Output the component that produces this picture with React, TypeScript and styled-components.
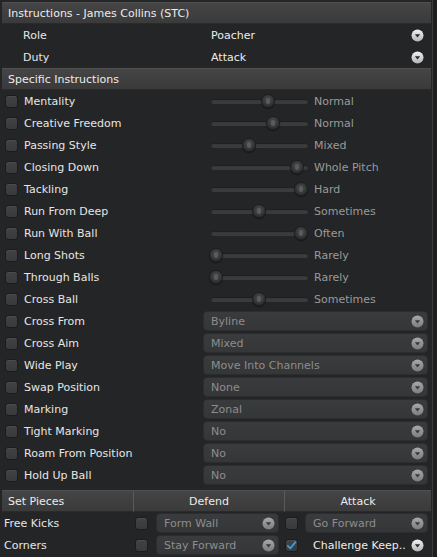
import React from "react";
import styled, { createGlobalStyle } from "styled-components";

const Global = createGlobalStyle`
  html, body { margin: 0; padding: 0; background: #1c1d1e; }
  body { font-family: "DejaVu Sans", "Liberation Sans", sans-serif; font-size: 11px; color: #e4e4e4; }
  * { box-sizing: border-box; }
`;

const Frame = styled.div`
  width: 437px;
  height: 557px;
  display: flex;
  background: #242526;
  overflow: hidden;
`;

const Panel = styled.div`
  width: 429px;
  margin-left: 2px;
  padding-top: 2px;
  display: flex;
  flex-direction: column;
`;

const Gutter = styled.div`
  flex: 1;
  margin-left: 1px;
  border-left: 1px solid #3a3b3c;
  background: #1d1e1f;
`;

const HeaderBar = styled.div`
  height: 22px;
  display: flex;
  align-items: center;
  padding-left: 6px;
  background: linear-gradient(#454545, #3a3a3a);
  border-top: 1px solid #505050;
  border-bottom: 1px solid #2a2a2a;
  color: #ececec;
`;

const Row = styled.div`
  height: 22px;
  display: grid;
  grid-template-columns: 201px 1fr;
  align-items: center;
`;

const LabelCell = styled.div<{ $indent?: number }>`
  display: flex;
  align-items: center;
  gap: 6px;
  padding-left: ${(p) => p.$indent ?? 3}px;
  color: #e6e6e6;
  white-space: nowrap;
`;

const Box = styled.div<{ $checked?: boolean }>`
  width: 13px;
  height: 13px;
  flex: none;
  border-radius: 3px;
  background: linear-gradient(#414243, #393a3b);
  border: 1px solid #1c1c1c;
  box-shadow: inset 0 1px 0 rgba(255, 255, 255, 0.06);
  display: flex;
  align-items: center;
  justify-content: center;
`;

const SliderWrap = styled.div`
  display: flex;
  align-items: center;
  padding-left: 8px;
`;

const Track = styled.div`
  position: relative;
  width: 97px;
  height: 5px;
  border-radius: 3px;
  background: #3a3b3c;
  box-shadow: inset 0 1px 1px rgba(0, 0, 0, 0.5);
`;

const Thumb = styled.div<{ $x: number }>`
  position: absolute;
  top: 50%;
  left: ${(p) => p.$x}px;
  width: 14px;
  height: 14px;
  margin-left: -7px;
  margin-top: -7px;
  border-radius: 50%;
  background: radial-gradient(circle at 50% 40%, #4c4d4e, #2f3031 70%);
  border: 1px solid #1e1e1e;
  box-shadow: 0 1px 1px rgba(0, 0, 0, 0.4);
  &::after {
    content: "";
    position: absolute;
    left: 4px;
    top: 3px;
    width: 4px;
    height: 6px;
    border-radius: 2px;
    background: #5a5b5c;
  }
`;

const SliderValue = styled.span`
  margin-left: 6px;
  color: #9a9a9a;
`;

const Select = styled.div<{ $enabled?: boolean; $w?: number }>`
  height: 20px;
  width: ${(p) => (p.$w ? `${p.$w}px` : "auto")};
  display: flex;
  align-items: center;
  justify-content: space-between;
  padding-left: 7px;
  padding-right: 3px;
  border-radius: 4px;
  background: ${(p) => (p.$enabled ? "transparent" : "linear-gradient(#3a3b3c, #353637)")};
  border: 1px solid ${(p) => (p.$enabled ? "transparent" : "#2c2d2e")};
  color: ${(p) => (p.$enabled ? "#ededed" : "#8d8d8d")};
  white-space: nowrap;
  overflow: hidden;
`;

const MainSelect = styled(Select)`
  margin-left: 0;
  margin-right: 3px;
`;

const SetGrid = styled.div`
  margin-top: 4px;
  display: grid;
  grid-template-columns: 131px 151px 147px;
`;

const SetHead = styled.div<{ $center?: boolean; $divider?: boolean }>`
  height: 22px;
  display: flex;
  align-items: center;
  justify-content: ${(p) => (p.$center ? "center" : "flex-start")};
  padding-left: ${(p) => (p.$center ? 0 : 6)}px;
  background: linear-gradient(#454545, #3a3a3a);
  border-top: 1px solid #505050;
  border-bottom: 1px solid #2a2a2a;
  border-left: ${(p) => (p.$divider ? "1px solid #5a5a5a" : "none")};
  color: #ececec;
`;

const SetLabel = styled.div`
  height: 22px;
  display: flex;
  align-items: center;
  padding-left: 2px;
  color: #e6e6e6;
`;

const SetCell = styled.div<{ $pl: number; $gap: number }>`
  height: 22px;
  display: flex;
  align-items: center;
  padding-left: ${(p) => p.$pl}px;
  gap: ${(p) => p.$gap}px;
`;

const Arrow = ({ bright }: { bright?: boolean }) => (
  <svg width="13" height="13" viewBox="0 0 13 13" style={{ flex: "none" }}>
    <defs>
      <linearGradient id={bright ? "ab" : "ad"} x1="0" y1="0" x2="0" y2="1">
        <stop offset="0" stopColor={bright ? "#f2f2f2" : "#a9a9a9"} />
        <stop offset="1" stopColor={bright ? "#b4b4b4" : "#7c7c7c"} />
      </linearGradient>
    </defs>
    <circle cx="6.5" cy="6.5" r="6" fill={`url(#${bright ? "ab" : "ad"})`} />
    <path d="M3.8 5.2 H9.2 L6.5 8.4 Z" fill={bright ? "#2a2a2a" : "#3a3a3a"} />
  </svg>
);

const Check = () => (
  <svg width="11" height="11" viewBox="0 0 11 11">
    <path d="M1.8 5.8 L4.3 8.3 L9.4 2.2" fill="none" stroke="#3d9be0" strokeWidth="1.8" strokeLinecap="round" strokeLinejoin="round" />
  </svg>
);

type Ctrl =
  | { kind: "slider"; x: number; value: string }
  | { kind: "select"; value: string };

const rows: { label: string; ctrl: Ctrl }[] = [
  { label: "Mentality", ctrl: { kind: "slider", x: 57, value: "Normal" } },
  { label: "Creative Freedom", ctrl: { kind: "slider", x: 62, value: "Normal" } },
  { label: "Passing Style", ctrl: { kind: "slider", x: 38, value: "Mixed" } },
  { label: "Closing Down", ctrl: { kind: "slider", x: 86, value: "Whole Pitch" } },
  { label: "Tackling", ctrl: { kind: "slider", x: 90, value: "Hard" } },
  { label: "Run From Deep", ctrl: { kind: "slider", x: 48, value: "Sometimes" } },
  { label: "Run With Ball", ctrl: { kind: "slider", x: 90, value: "Often" } },
  { label: "Long Shots", ctrl: { kind: "slider", x: 5, value: "Rarely" } },
  { label: "Through Balls", ctrl: { kind: "slider", x: 5, value: "Rarely" } },
  { label: "Cross Ball", ctrl: { kind: "slider", x: 48, value: "Sometimes" } },
  { label: "Cross From", ctrl: { kind: "select", value: "Byline" } },
  { label: "Cross Aim", ctrl: { kind: "select", value: "Mixed" } },
  { label: "Wide Play", ctrl: { kind: "select", value: "Move Into Channels" } },
  { label: "Swap Position", ctrl: { kind: "select", value: "None" } },
  { label: "Marking", ctrl: { kind: "select", value: "Zonal" } },
  { label: "Tight Marking", ctrl: { kind: "select", value: "No" } },
  { label: "Roam From Position", ctrl: { kind: "select", value: "No" } },
  { label: "Hold Up Ball", ctrl: { kind: "select", value: "No" } },
];

export default function App() {
  return (
    <>
      <Global />
      <Frame>
        <Panel>
          <HeaderBar>Instructions - James Collins (STC)</HeaderBar>
          <Row>
            <LabelCell $indent={21}>Role</LabelCell>
            <MainSelect $enabled>
              Poacher
              <Arrow bright />
            </MainSelect>
          </Row>
          <Row>
            <LabelCell $indent={21}>Duty</LabelCell>
            <MainSelect $enabled>
              Attack
              <Arrow bright />
            </MainSelect>
          </Row>
          <HeaderBar>Specific Instructions</HeaderBar>
          {rows.map((r) => (
            <Row key={r.label}>
              <LabelCell>
                <Box />
                {r.label}
              </LabelCell>
              {r.ctrl.kind === "slider" ? (
                <SliderWrap>
                  <Track>
                    <Thumb $x={r.ctrl.x} />
                  </Track>
                  <SliderValue>{r.ctrl.value}</SliderValue>
                </SliderWrap>
              ) : (
                <MainSelect>
                  {r.ctrl.value}
                  <Arrow />
                </MainSelect>
              )}
            </Row>
          ))}
          <SetGrid>
            <SetHead>Set Pieces</SetHead>
            <SetHead $center $divider>Defend</SetHead>
            <SetHead $center $divider>Attack</SetHead>

            <SetLabel>Free Kicks</SetLabel>
            <SetCell $pl={2} $gap={8}>
              <Box />
              <Select $w={123}>
                Form Wall
                <Arrow />
              </Select>
            </SetCell>
            <SetCell $pl={1} $gap={7}>
              <Box />
              <Select $w={123}>
                Go Forward
                <Arrow />
              </Select>
            </SetCell>

            <SetLabel>Corners</SetLabel>
            <SetCell $pl={2} $gap={8}>
              <Box />
              <Select $w={123}>
                Stay Forward
                <Arrow />
              </Select>
            </SetCell>
            <SetCell $pl={1} $gap={7}>
              <Box $checked>
                <Check />
              </Box>
              <Select $enabled $w={123}>
                Challenge Keep..
                <Arrow bright />
              </Select>
            </SetCell>
          </SetGrid>
        </Panel>
        <Gutter />
      </Frame>
    </>
  );
}
